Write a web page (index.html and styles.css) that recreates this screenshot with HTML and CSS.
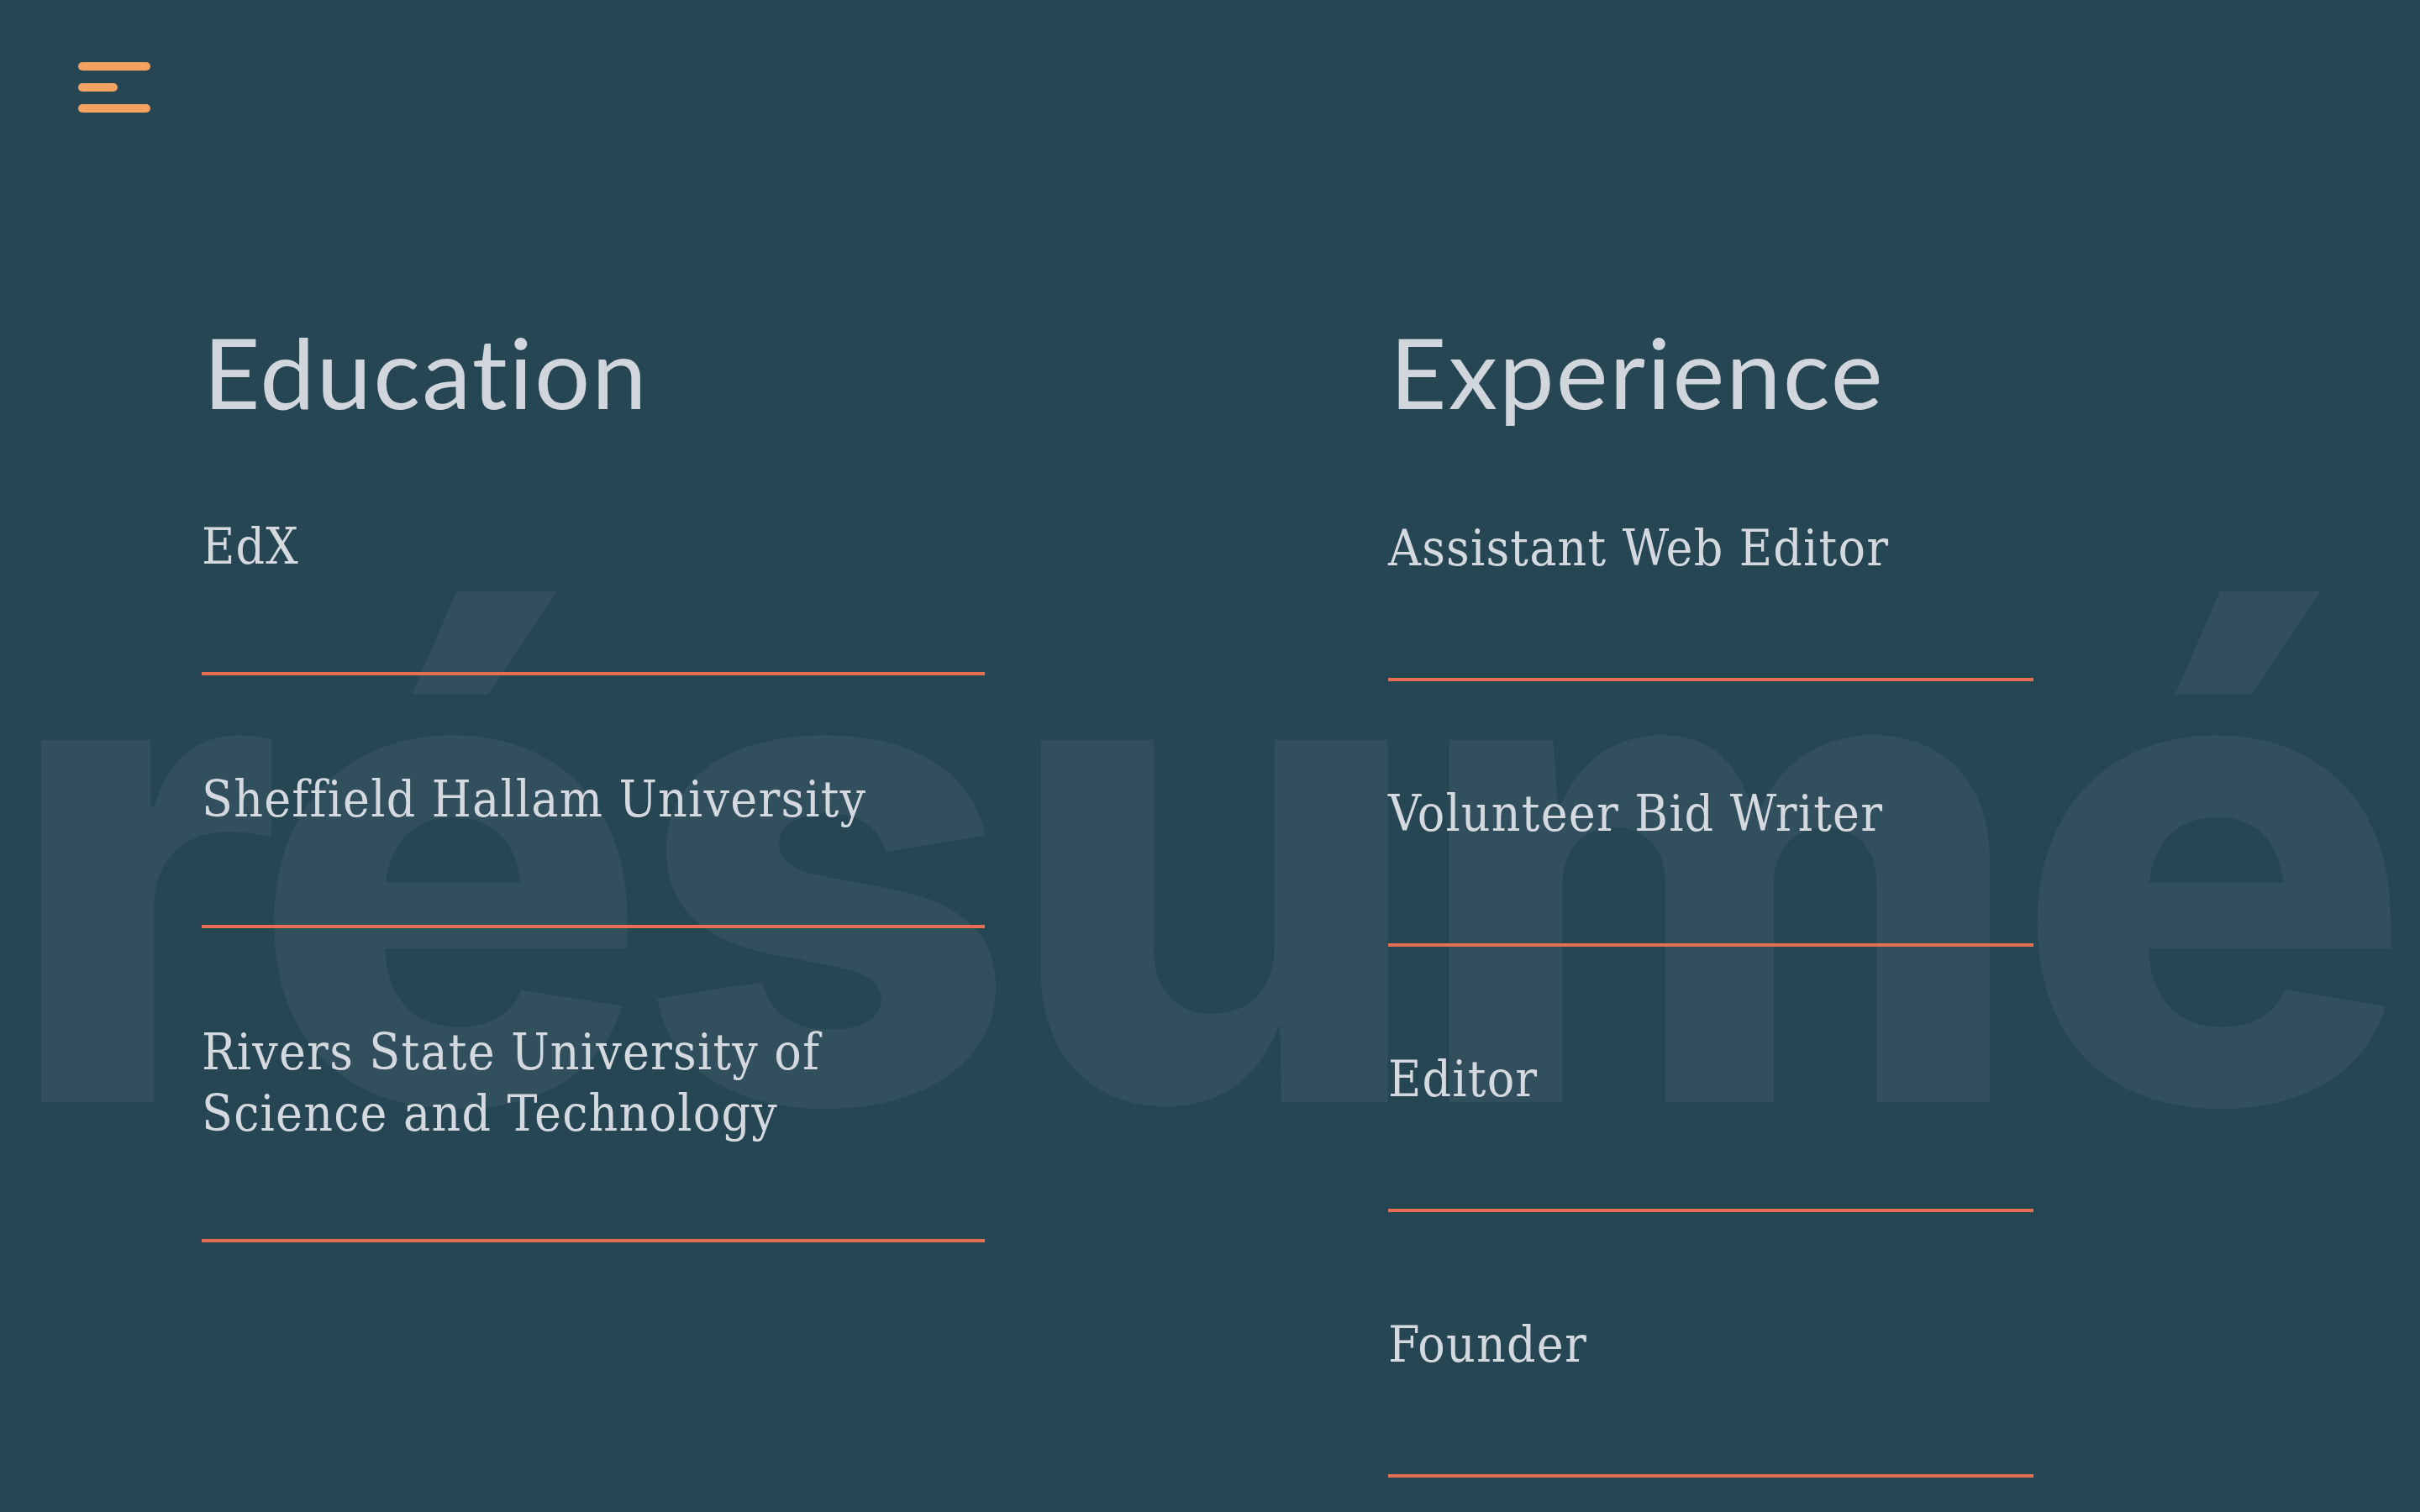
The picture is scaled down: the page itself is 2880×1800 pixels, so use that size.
FILE: index.html
```html
<!DOCTYPE html>
<html lang="en">
<head>
<meta charset="utf-8">
<title>Résumé</title>
<link rel="stylesheet" href="styles.css">
</head>
<body>
<div class="bgword" aria-hidden="true">résumé</div>
<header class="topbar">
  <button class="menu" aria-label="Menu">
    <span class="bar bar-long"></span>
    <span class="bar bar-short"></span>
    <span class="bar bar-long"></span>
  </button>
</header>
<main class="columns">
  <section class="col col-edu">
    <h2 class="col-title">Education</h2>
    <ul class="entries">
      <li class="entry">EdX</li>
      <li class="entry">Sheffield Hallam University</li>
      <li class="entry">Rivers State University of<br>Science and Technology</li>
    </ul>
  </section>
  <section class="col col-exp">
    <h2 class="col-title">Experience</h2>
    <ul class="entries">
      <li class="entry">Assistant Web Editor</li>
      <li class="entry">Volunteer Bid Writer</li>
      <li class="entry">Editor</li>
      <li class="entry">Founder</li>
    </ul>
  </section>
</main>
</body>
</html>
```
FILE: styles.css
```css
* { box-sizing: border-box; }
html, body {
  margin: 0;
  padding: 0;
}
body {
  background: #264653;
  color: #d3d7de;
  font-family: "Lato", "Noto Sans", sans-serif;
  min-height: 1800px;
  position: relative;
  overflow: hidden;
}
.bgword {
  position: absolute;
  left: 0;
  right: 0;
  top: 630px;
  padding-right: 20px;
  text-align: center;
  font-family: "Inter", "Liberation Sans", sans-serif;
  font-weight: 800;
  font-size: 790px;
  line-height: 1;
  letter-spacing: -0.02em;
  color: #314f5c;
  white-space: nowrap;
  z-index: 0;
  user-select: none;
}
.topbar {
  position: relative;
  z-index: 1;
  padding: 74px 0 0 93px;
  height: 134px;
}
.menu {
  display: flex;
  flex-direction: column;
  gap: 15px;
  padding: 0;
  margin: 0;
  border: 0;
  background: transparent;
  cursor: pointer;
}
.bar {
  display: block;
  height: 10px;
  border-radius: 5px;
  background: #f4a261;
}
.bar-long { width: 86px; }
.bar-short { width: 47px; }
.columns {
  position: relative;
  z-index: 1;
  display: grid;
  grid-template-columns: 932px 768px;
  column-gap: 480px;
  padding: 250px 0 0 240px;
}
.col-title {
  margin: 0;
  font-family: "Lato", "Noto Sans", sans-serif;
  font-weight: 400;
  font-size: 117px;
  line-height: 1;
  letter-spacing: 0.018em;
  color: #d1d5dc;
  padding-left: 2px;
}
.entries {
  list-style: none;
  margin: 0;
  padding: 0;
}
.entry {
  font-family: "DejaVu Serif Condensed", "DejaVu Serif", serif;
  font-stretch: condensed;
  font-size: 60px;
  line-height: 73px;
  letter-spacing: 0.02em;
  color: #d4d8df;
  border-bottom: 4px solid #e76f51;
}
.col-edu .entries { margin-top: 2px; }
.col-edu .entry { padding: 111px 0 113px; }
.col-exp .entry { padding: 121px 0 118px; }
.col-exp .entry:first-child { padding-top: 115px; }
```
